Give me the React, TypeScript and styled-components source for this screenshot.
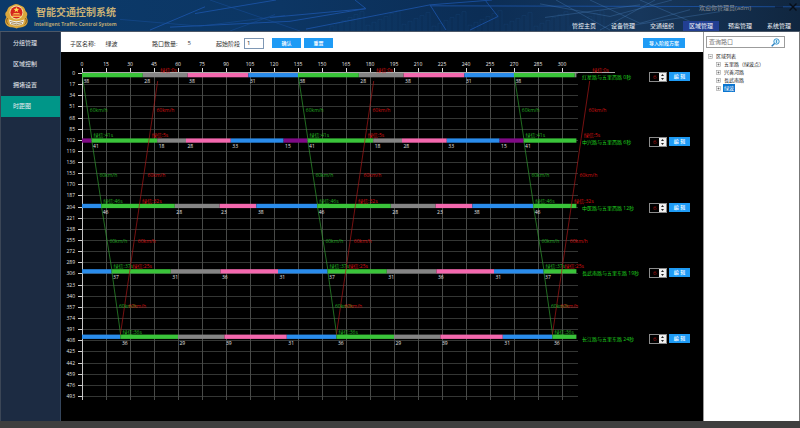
import React from "react";
import styled, { createGlobalStyle } from "styled-components";

const Global = createGlobalStyle`
  * { box-sizing: border-box; }
  body { margin: 0; background: #3f3f3f; }
  body, button, input { font-family: "Open Sans", "Noto Sans CJK SC", sans-serif; font-size: 6px; }
  button { border: 0; padding: 0; cursor: pointer; }
  ul { list-style: none; margin: 0; padding: 0; }
`;

const Page = styled.div`
  min-height: 100vh;
  display: flex;
  flex-direction: column;
  background: #3f3f3f;
`;

const Header = styled.header`
  position: relative;
  height: 32px;
  display: flex;
  justify-content: space-between;
  background: linear-gradient(90deg, #0b3a6a 0%, #0c3664 35%, #0b2d55 60%, #17375c 80%, #10263f 100%);
  border-bottom: 1px solid #4c5868;
  overflow: hidden;
`;

const Backdrop = styled.svg`
  position: absolute;
  inset: 0;
  width: 100%;
  height: 100%;
`;

const Brand = styled.div`
  position: relative;
  display: flex;
  align-items: flex-start;
  gap: 5px;
  padding: 4px 0 0 4px;
`;

const BrandText = styled.div`
  display: flex;
  flex-direction: column;
  padding-top: 1px;
`;

const Title = styled.h1`
  margin: 0;
  padding-left: 2px;
  font-size: 10px;
  line-height: 14px;
  font-weight: 700;
  color: #c9b176;
`;

const Subtitle = styled.div`
  font-size: 5px;
  line-height: 10px;
  font-weight: 700;
  color: #b9a674;
`;

const HeaderRight = styled.div`
  position: relative;
  display: flex;
  flex-direction: column;
  justify-content: space-between;
  align-items: flex-end;
  padding-right: 3px;
`;

const UserBar = styled.div`
  display: flex;
  align-items: center;
  height: 14px;
  color: #8f9397;
`;

const WindowButton = styled.button<{ $gap: number }>`
  display: flex;
  margin-left: ${(p) => p.$gap}px;
  background: none;
`;

const Nav = styled.nav`
  display: flex;
  gap: 3px;
`;

const NavLink = styled.a<{ $active?: boolean }>`
  padding: 0 6px;
  line-height: 10px;
  color: #f2f5f8;
  text-decoration: none;
  background: ${(p) => (p.$active ? "#223f93" : "transparent")};
`;

const Body = styled.div`
  flex: 1;
  display: flex;
  align-items: stretch;
  margin-bottom: 7px;
`;

const Sidebar = styled.nav`
  flex: 0 0 61px;
  padding-top: 1px;
  background: #1c2b42;
  border-left: 1px solid #3b4656;
  border-right: 1px solid #34455c;
`;

const SideLink = styled.a<{ $active?: boolean }>`
  display: block;
  padding-left: 12px;
  line-height: 21px;
  color: #e9edf2;
  text-decoration: none;
  background: ${(p) => (p.$active ? "#009688" : "transparent")};
`;

const Main = styled.main`
  flex: 1;
  min-width: 0;
  display: flex;
  flex-direction: column;
  background: #000;
`;

const Toolbar = styled.form`
  height: 20px;
  display: flex;
  align-items: center;
  padding: 2px 18px 0 9px;
  background: #fff;
  color: #333;
`;

const Field = styled.div<{ $width?: number; $gap: number }>`
  display: flex;
  align-items: center;
  gap: ${(p) => p.$gap}px;
  ${(p) => (p.$width ? `width: ${p.$width}px;` : "")}
`;

const StageInput = styled.input`
  width: 20px;
  height: 11px;
  padding: 0 2px;
  border: 1px solid #7e97b4;
  background: #fff;
  color: #222;
`;

const Button = styled.button<{ $width: number; $height?: number }>`
  width: ${(p) => p.$width}px;
  height: ${(p) => p.$height ?? 10}px;
  line-height: ${(p) => p.$height ?? 10}px;
  background: #1e9bf5;
  color: #fff;
  font-size: 5px;
  font-weight: 500;
`;

const ButtonGroup = styled.div`
  display: flex;
  gap: 3px;
  margin: 0 auto 0 8px;
`;

const Canvas = styled.section`
  flex: 1;
  display: flex;
  align-items: flex-start;
  background: #000;
`;

const Chart = styled.svg`
  flex: none;
  display: block;
  font-family: "Open Sans", "Noto Sans CJK SC", sans-serif;
  font-size: 5px;
`;

const Editors = styled.div`
  display: grid;
  grid-template-rows: repeat(5, 1fr);
  height: 327px;
  margin-top: 20px;
`;

const Editor = styled.div`
  display: flex;
  align-items: flex-start;
  gap: 2px;
`;

const Spinner = styled.div`
  display: flex;
  width: 18px;
  height: 10px;
  border: 1px solid #8b8b8b;
`;

const SpinInput = styled.input`
  flex: 1;
  min-width: 0;
  padding: 0 0 0 3px;
  border: 0;
  background: #000;
  color: #b01414;
  appearance: textfield;
  &::-webkit-inner-spin-button { appearance: none; margin: 0; }
`;

const SpinButtons = styled.div`
  width: 7px;
  display: flex;
  flex-direction: column;
`;

const SpinButton = styled.button`
  flex: 1;
  display: flex;
  align-items: center;
  justify-content: center;
  background: #f0f0f0;
`;

const Aside = styled.aside`
  flex: 0 0 97px;
  padding: 4px 2px 0;
  background: #fff;
  border-left: 1px solid #9a9a9a;
  border-right: 1px solid #777;
`;

const Search = styled.form`
  display: flex;
  align-items: center;
  width: 79px;
  height: 12px;
  border: 1px solid #9c9c9c;
`;

const SearchInput = styled.input`
  flex: 1;
  min-width: 0;
  padding: 0 2px;
  border: 0;
  outline: 0;
  &::placeholder { color: #777; }
`;

const SearchButton = styled.button`
  display: flex;
  margin-right: 4px;
  background: none;
`;

const Tree = styled.ul`
  padding: 4px 0 0 2px !important;
  color: #222;
  font-size: 5px;
  line-height: 8px;
`;

const Branch = styled.ul`
  padding-left: 8px !important;
`;

const TreeRow = styled.div`
  display: flex;
  align-items: center;
  gap: 2px;
`;

const TreeLabel = styled.a<{ $selected?: boolean }>`
  padding: 0 1px;
  color: ${(p) => (p.$selected ? "#fff" : "#222")};
  background: ${(p) => (p.$selected ? "#0a74cf" : "transparent")};
  text-decoration: none;
`;

const COLORS = { green: "#3ac43a", gray: "#858585", pink: "#f468ae", blue: "#2a8ceb", purple: "#800a86" };
type Phase = [keyof typeof COLORS, number];

const CYCLE = 135;
const END = 309;
const ROADS: { name: string; offset: number; phases: Phase[]; red: string }[] = [
  { name: "红星路与五里西路  0秒", offset: 0, red: "0s", phases: [["green", 38], ["gray", 28], ["pink", 38], ["blue", 31]] },
  { name: "中兴路与五里西路  6秒", offset: 6, red: "5s", phases: [["green", 41], ["gray", 18], ["pink", 28], ["blue", 33], ["purple", 15]] },
  { name: "中医路与五里西路  12秒", offset: 12, red: "32s", phases: [["green", 46], ["gray", 28], ["pink", 23], ["blue", 38]] },
  { name: "長武南路与五里东路  19秒", offset: 18.5, red: "25s", phases: [["green", 37], ["gray", 31], ["pink", 36], ["blue", 31]] },
  { name: "长江路与五里东路  24秒", offset: 24, red: "", phases: [["green", 36], ["gray", 29], ["pink", 39], ["blue", 31]] },
];
const RED_TIMES = [47.3, 42, 36, 30, 24];

const X0 = 21;
const Y0 = 21;
const px = (t: number) => X0 + t * 1.6;
const py = (d: number) => Y0 + d * 0.655;
const rowY = (i: number) => Y0 + i * 65.4;
const snap = (v: number) => Math.round(v) + 0.5;

const xTicks = Array.from({ length: 21 }, (_, i) => i * 15);
const yTicks = Array.from({ length: 30 }, (_, i) => i * 17);

function Bar({ index }: { index: number }) {
  const { offset, phases } = ROADS[index];
  const y = rowY(index);
  const parts: React.ReactNode[] = [];
  let t = offset - CYCLE;
  for (let c = 0; c < 4; c++) {
    for (const [color, length] of phases) {
      const from = Math.max(0, t);
      const to = Math.min(END, t + length);
      if (to > from) {
        parts.push(<rect key={`b${t}`} x={px(from)} y={y} width={px(to) - px(from)} height={4.3} fill={COLORS[color]} />);
        if (t >= 0 && t < 307) {
          parts.push(<text key={`t${t}`} x={px(t) + 1.5} y={y + 10} fill="#e4e4e4">{length}</text>);
        }
      }
      t += length;
    }
  }
  return <g>{parts}</g>;
}

function Wave({ shift }: { shift: number }) {
  return (
    <g>
      {ROADS.map((road, i) => {
        const gx = px(road.offset + shift);
        const rx = px(RED_TIMES[i] + shift);
        const y = rowY(i);
        const next = ROADS[i + 1];
        const nextG = next ? px(next.offset + shift) : 0;
        const nextR = next ? px(RED_TIMES[i + 1] + shift) : 0;
        return (
          <g key={road.name}>
            {next && (
              <>
                <line x1={gx + 0.5} y1={y + 4} x2={nextG + 0.5} y2={rowY(i + 1) + 2} stroke="#2f9a2f" strokeWidth={0.7} />
                <line x1={rx} y1={y + (i ? 0 : 8)} x2={nextR} y2={rowY(i + 1)} stroke="#a81818" strokeWidth={0.7} />
                <text x={(gx + nextG) / 2 + 3} y={y + 39} fill="#22a822">60km/h</text>
                <text x={(rx + nextR) / 2 + 3} y={y + 39} fill="#d01010">60km/h</text>
              </>
            )}
            {i > 0 && <text x={gx + 2} y={y - 1} fill="#22b422">绿信:{road.phases[0][1]}s</text>}
            {road.red && <text x={rx + 2.5} y={y - 1} fill="#d81010">绿信:{road.red}</text>}
          </g>
        );
      })}
    </g>
  );
}

function TimeDistanceChart() {
  const right = px(310);
  const bottom = 348;
  return (
    <Chart width="588" height="369" viewBox="0 0 588 369" role="img" aria-label="时距图">
      {yTicks.map((d) => (
        <g key={d}>
          <line x1={X0} x2={right} y1={snap(py(d))} y2={snap(py(d))} stroke="#343634" />
          <line x1={X0 - 4} x2={X0} y1={snap(py(d))} y2={snap(py(d))} stroke="#d0d0d0" />
          <text x={14} y={py(d) + 2} textAnchor="end" fill="#e0e0e0">{d}</text>
        </g>
      ))}
      {xTicks.map((t) => (
        <g key={t}>
          <line x1={snap(px(t))} x2={snap(px(t))} y1={Y0} y2={bottom} stroke={t ? "#484a48" : "#c4c4c4"} />
          <line x1={snap(px(t))} x2={snap(px(t))} y1={Y0 - 5} y2={Y0} stroke="#dcdcdc" />
          <text x={px(t)} y={14} textAnchor="middle" fill="#e8e8e8">{t}</text>
        </g>
      ))}
      <line x1={X0} x2={554} y1={20.5} y2={20.5} stroke="#a8a8a8" />
      {ROADS.map((r, i) => <Bar key={r.name} index={i} />)}
      {[0, CYCLE, CYCLE * 2].map((s) => <Wave key={s} shift={s} />)}
      {ROADS.map((r, i) => (
        <text key={r.name} x={521} y={rowY(i) + 6} fill="#1fd01f">{r.name}</text>
      ))}
    </Chart>
  );
}

const Badge = () => (
  <svg width="25" height="25" viewBox="0 0 25 25" aria-hidden="true">
    <path d="M12 0 C14 0 15 1 16.500 1.500 C19 2 21 4 21.500 7 C24 9 23.500 11 22.500 13 C24.500 17 24 20 21 22 C18 24 15 23 12.500 24.500 C10 23 6 24 3.500 22 C0.500 19.500 0.500 16.500 2.500 13 C0.500 11 1 8.500 3 7 C3.500 4 5.500 2 8 1.500 C9.500 1 10.500 0 12 0Z" fill="#d9a73c" />
    <circle cx="12.400" cy="8.500" r="6.900" fill="#f4dfa0" />
    <circle cx="12.400" cy="8.500" r="6" fill="#d4241c" />
    <path d="M12.400 3l.8 1.700 1.900.2-1.400 1.300.4 1.900-1.700-1-1.700 1 .4-1.900-1.400-1.300 1.900-.2z" fill="#ffdc58" />
    <path d="M8.500 11h8M9.500 9.500h6M8 12.500h9" stroke="#ffd75a" strokeWidth=".8" />
    <path d="M5 15.500 Q12.400 19 20 15.500 L19 20 Q12.400 23 6 20Z" fill="#eef0ee" />
    <path d="M6 17.500 Q12.400 20.500 19 17.500M7 19.500 Q12.400 22 18 19.500" stroke="#9c7533" strokeWidth=".8" fill="none" />
    <path d="M3.500 14c-1.500 3-1 5 1 6.500M21.500 14c1.500 3 1 5-1 6.500" stroke="#8e5b18" strokeWidth="1" fill="none" />
  </svg>
);

const buildings = Array.from({ length: 46 }, (_, i) => ({ x: 330 + i * 6, h: 5 + ((i * 37) % 17) }));

const CityLines = () => (
  <Backdrop viewBox="0 0 800 32" preserveAspectRatio="none" aria-hidden="true">
    <g stroke="#2460a0" strokeWidth=".5" opacity=".3" fill="none">
      {buildings.map((b) => <path key={b.x} d={`M${b.x} 32v-${b.h}h4v${b.h}`} />)}
    </g>
    <g stroke="#1f5bb8" fill="none" opacity=".7">
      <path d="M150 31L205 7M195 14L276 0M170 28L290 22 365 9M270 18L366 9M306 30L430 5 492 0M430 6L800 7M430 5L446 31M485 0L498 17 470 31M355 0L366 9" strokeWidth="1" />
      <path d="M120 20L200 27 285 16M210 0L300 32M230 32L275 15" strokeWidth=".5" />
    </g>
    <g stroke="#4a7fba" fill="none" opacity=".45" strokeWidth=".8">
      <path d="M540 4L610 17 672 0M556 0L610 31M590 0L640 24 690 10M600 31L655 0M640 0L690 22M545 18L640 5M620 28L720 12" />
    </g>
  </Backdrop>
);

const Expander = ({ open }: { open?: boolean }) => (
  <svg width="5" height="5" viewBox="0 0 5 5" aria-hidden="true">
    <rect x=".5" y=".5" width="4" height="4" fill="#f5f5f5" stroke="#a0a0a0" strokeWidth=".6" />
    <path d={open ? "M1.500 2.500h2" : "M1.500 2.500h2M2.500 1.500v2"} stroke="#555" strokeWidth=".6" />
  </svg>
);

const NAV = ["管控主页", "设备管理", "交通组织", "区域管理", "预案管理", "系统管理"];
const SIDE = ["分组管理", "区域控制", "拥堵设置", "时距图"];
const AREAS = ["五里路（绿波点）", "兴善河路", "長武南路", "绿波"];

export default function App() {
  return (
    <Page>
      <Global />
      <Header>
        <CityLines />
        <Brand>
          <Badge />
          <BrandText>
            <Title>智能交通控制系统</Title>
            <Subtitle>Intelligent Traffic Control System</Subtitle>
          </BrandText>
        </Brand>
        <HeaderRight>
          <UserBar>
            <span>欢迎你管理员(adm)</span>
            <WindowButton $gap={24} aria-label="最小化">
              <svg width="8" height="8" viewBox="0 0 8 8"><path d="M0 4h8" stroke="#0a1524" /></svg>
            </WindowButton>
            <WindowButton $gap={6} aria-label="关闭">
              <svg width="8" height="8" viewBox="0 0 8 8"><path d="M.5 .5l7 7M7.500 .5l-7 7" stroke="#080e18" strokeWidth="1.400" /></svg>
            </WindowButton>
          </UserBar>
          <Nav>
            {NAV.map((n) => <NavLink key={n} href="#" $active={n === "区域管理"}>{n}</NavLink>)}
          </Nav>
        </HeaderRight>
      </Header>
      <Body>
        <Sidebar>
          {SIDE.map((n) => <SideLink key={n} href="#" $active={n === "时距图"}>{n}</SideLink>)}
        </Sidebar>
        <Main>
          <Toolbar onSubmit={(e) => e.preventDefault()}>
            <Field $width={82} $gap={10}><span>子区名称:</span><span>绿波</span></Field>
            <Field $width={64} $gap={10}><span>路口数量:</span><span>5</span></Field>
            <Field $gap={4}>
              <label htmlFor="stage">起始阶段</label>
              <StageInput id="stage" defaultValue="1" />
            </Field>
            <ButtonGroup>
              <Button type="submit" $width={29}>确认</Button>
              <Button type="reset" $width={29}>重置</Button>
            </ButtonGroup>
            <Button type="button" $width={42}>导入阶段方案</Button>
          </Toolbar>
          <Canvas>
            <TimeDistanceChart />
            <Editors>
              {ROADS.map((r) => (
                <Editor key={r.name}>
                  <Spinner>
                    <SpinInput type="number" defaultValue={6} aria-label={r.name} />
                    <SpinButtons>
                      <SpinButton aria-label="增加"><svg width="3" height="2" viewBox="0 0 3 2"><path d="M0 2L1.500 0 3 2z" fill="#222" /></svg></SpinButton>
                      <SpinButton aria-label="减少"><svg width="3" height="2" viewBox="0 0 3 2"><path d="M0 0L1.500 2 3 0z" fill="#222" /></svg></SpinButton>
                    </SpinButtons>
                  </Spinner>
                  <Button $width={21} $height={9}>编 辑</Button>
                </Editor>
              ))}
            </Editors>
          </Canvas>
        </Main>
        <Aside>
          <Search onSubmit={(e) => e.preventDefault()}>
            <SearchInput placeholder="查询路口" aria-label="查询路口" />
            <SearchButton aria-label="查询">
              <svg width="9" height="9" viewBox="0 0 9 9">
                <circle cx="5.500" cy="3.500" r="2.700" fill="#d7effb" stroke="#2a8cc8" strokeWidth=".9" />
                <path d="M3.500 5.500L.7 8.300" stroke="#2a7fc0" strokeWidth="1.400" />
                <path d="M5.500 2v3" stroke="#2a8cc8" strokeWidth=".8" />
              </svg>
            </SearchButton>
          </Search>
          <Tree>
            <li>
              <TreeRow><Expander open /><TreeLabel href="#">区域列表</TreeLabel></TreeRow>
              <Branch>
                {AREAS.map((a) => (
                  <li key={a}>
                    <TreeRow><Expander /><TreeLabel href="#" $selected={a === "绿波"}>{a}</TreeLabel></TreeRow>
                  </li>
                ))}
              </Branch>
            </li>
          </Tree>
        </Aside>
      </Body>
    </Page>
  );
}
